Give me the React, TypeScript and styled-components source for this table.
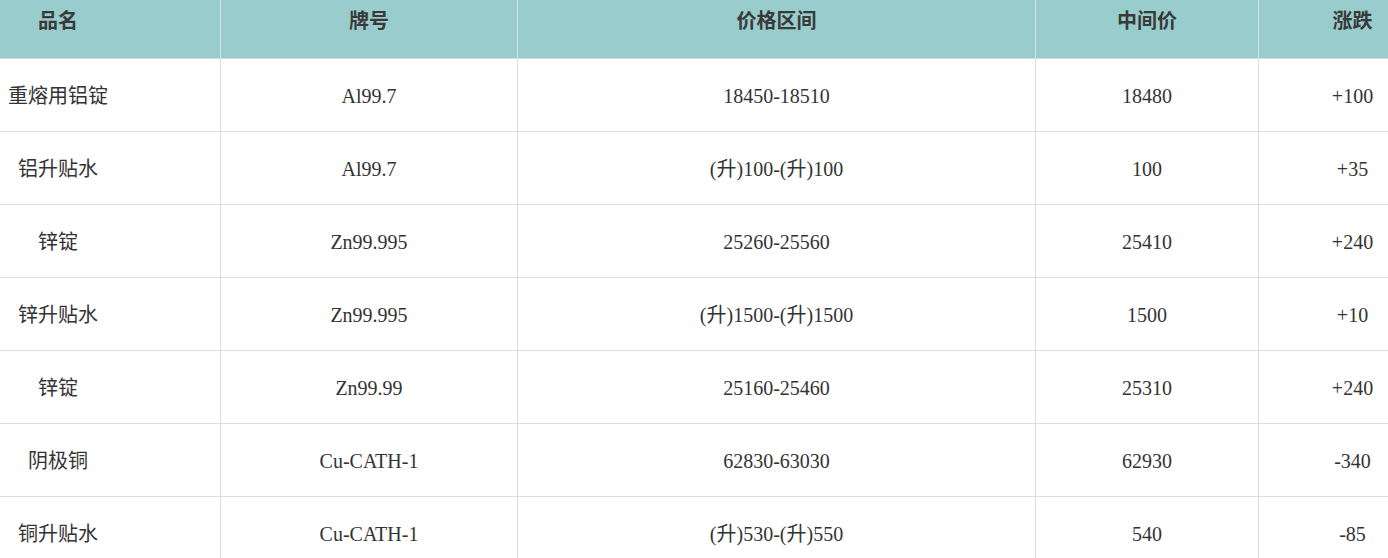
import React from 'react';
import styled, { createGlobalStyle } from 'styled-components';

const GlobalStyle = createGlobalStyle`
  body {
    margin: 0;
    background: #fff;
    font-family: "Liberation Serif", "Noto Sans CJK SC", serif;
  }
`;

const rows = [
  { name: '重熔用铝锭', brand: 'Al99.7', range: '18450-18510', mid: '18480', change: '+100' },
  { name: '铝升贴水', brand: 'Al99.7', range: '(升)100-(升)100', mid: '100', change: '+35' },
  { name: '锌锭', brand: 'Zn99.995', range: '25260-25560', mid: '25410', change: '+240' },
  { name: '锌升贴水', brand: 'Zn99.995', range: '(升)1500-(升)1500', mid: '1500', change: '+10' },
  { name: '锌锭', brand: 'Zn99.99', range: '25160-25460', mid: '25310', change: '+240' },
  { name: '阴极铜', brand: 'Cu-CATH-1', range: '62830-63030', mid: '62930', change: '-340' },
  { name: '铜升贴水', brand: 'Cu-CATH-1', range: '(升)530-(升)550', mid: '540', change: '-85' },
];

const headers = ['品名', '牌号', '价格区间', '中间价', '涨跌'];

const App = () => {
  return (
    <>
      <GlobalStyle />
      <Wrapper>
        <Table>
          <HeadRow>
            {headers.map((h) => (
              <HeadCell key={h}>{h}</HeadCell>
            ))}
          </HeadRow>
          {rows.map((r, i) => (
            <Row key={i}>
              <Cell>{r.name}</Cell>
              <Cell>{r.brand}</Cell>
              <Cell>{r.range}</Cell>
              <Cell>{r.mid}</Cell>
              <Cell>{r.change}</Cell>
            </Row>
          ))}
        </Table>
      </Wrapper>
    </>
  );
};

export default App;

const Wrapper = styled.div`
  width: 100vw;
  height: 100vh;
  overflow: hidden;
`;

// table is scrolled a little to the right, so the first column starts off screen
const Table = styled.div`
  margin-left: -104px;
  width: 1551px;
`;

const HeadRow = styled.div`
  display: grid;
  grid-template-columns: 325px 297px 518px 223px 188px;
  height: 59px;
  background-color: #99cccc;
  border-bottom: 1px solid #d4dcdc;
  box-sizing: border-box;
`;

const Row = styled.div`
  display: grid;
  grid-template-columns: 325px 297px 518px 223px 188px;
  height: 73px;
  border-bottom: 1px solid #dddddd;
  box-sizing: border-box;
`;

const HeadCell = styled.div`
  box-sizing: border-box;
  border-right: 1px solid #d8e4e4;
  text-align: center;
  font-size: 20px;
  font-weight: 700;
  color: #3a3a3a;
  line-height: 43px;
`;

const Cell = styled.div`
  box-sizing: border-box;
  border-right: 1px solid #dddddd;
  display: flex;
  align-items: center;
  justify-content: center;
  font-size: 20px;
  line-height: 24px;
  color: #333;
  padding-top: 1px;
`;
